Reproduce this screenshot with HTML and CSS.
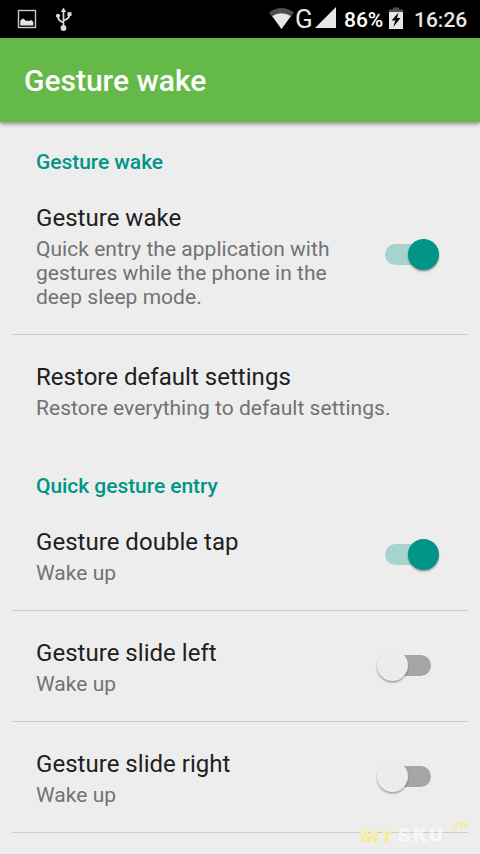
FILE: index.html
```html
<!DOCTYPE html>
<html lang="en">
<head>
<meta charset="utf-8">
<title>Gesture wake</title>
<link rel="stylesheet" href="styles.css">
</head>
<body>
<div class="status">
  <svg class="status-left" width="80" height="38" viewBox="0 0 80 38">
    <rect x="18.500" y="10.500" width="17" height="17" fill="none" stroke="#c9c9c9" stroke-width="1.400"/>
    <path d="M20.300 25.500V20.500l2.500-2 1.500.7 1.700 1.800 1.700-.5 1.600.4 2-.9 2 2v3.500z" fill="#e4e4e4"/>
    <g fill="none" stroke="#dcdcdc" stroke-width="1.700"><path d="M63.500 28V10M63.500 22.500Q58 21 58 16M63.500 20.500Q69.500 19 69.500 14"/></g>
    <g fill="#dcdcdc"><path d="M60.800 12 63.500 7.800 66.200 12z"/><circle cx="63.500" cy="28" r="2.900"/><circle cx="58" cy="15.800" r="2.100"/><rect x="67.500" y="12.200" width="4" height="3.800"/></g>
  </svg>
  <svg class="signal" width="28" height="38" viewBox="0 0 28 38">
    <path d="M1 12.500Q13.500 3.500 26 12.500L13.500 29z" fill="#4d4d4d"/>
    <path d="M4.200 16Q13.500 10.500 22.800 16L13.500 29z" fill="#e6e6e6"/>
  </svg>
  <span class="network">G</span>
  <svg class="cell" width="22" height="38" viewBox="0 0 22 38"><path d="M0 28 21 7V28z" fill="#e6e6e6"/></svg>
  <span class="percent">86%</span>
  <svg class="battery" width="15" height="38" viewBox="0 0 15 38">
    <path d="M4 7.500h6v2h4v3H0v-3h4z" fill="#4d4d4d"/>
    <path d="M0 12h14v17H0z" fill="#e6e6e6"/>
    <path d="M9.500 12.500 2.600 20.500H6.300L4.300 27 11.500 18H8z" fill="#000"/>
  </svg>
  <span class="clock">16:26</span>
</div>
<header class="toolbar"><h1>Gesture wake</h1></header>
<main>
  <h2 class="first">Gesture wake</h2>
  <section class="row divided">
    <div class="text"><h3>Gesture wake</h3><p>Quick entry the application with gestures while the phone in the deep sleep mode.</p></div>
    <div class="switch on"><i class="thumb"></i></div>
  </section>
  <section class="row">
    <div class="text wide"><h3>Restore default settings</h3><p>Restore everything to default settings.</p></div>
  </section>
  <h2>Quick gesture entry</h2>
  <section class="row divided">
    <div class="text"><h3>Gesture double tap</h3><p>Wake up</p></div>
    <div class="switch on"><i class="thumb"></i></div>
  </section>
  <section class="row divided">
    <div class="text"><h3>Gesture slide left</h3><p>Wake up</p></div>
    <div class="switch"><i class="thumb"></i></div>
  </section>
  <section class="row divided">
    <div class="text"><h3>Gesture slide right</h3><p>Wake up</p></div>
    <div class="switch"><i class="thumb"></i></div>
  </section>
</main>
<div class="watermark"><span class="my">MY</span><span class="sku">SKU</span><span class="ru">.ru</span></div>
</body>
</html>
```
FILE: styles.css
```css
* { box-sizing: border-box; }
body {
  position: relative;
  width: 480px;
  height: 854px;
  margin: 0;
  overflow: hidden;
  background: #ededed;
  font-family: Roboto, "Liberation Sans", sans-serif;
}
h1, h2, h3, p { margin: 0; }
svg { display: block; flex: none; }
.status {
  display: flex;
  height: 38px;
  background: #000;
  color: #e6e6e6;
  font-size: 21px;
  line-height: 40px;
}
.signal { margin-left: 188px; }
.network { width: 19px; margin-left: -1px; font-size: 26px; line-height: 38px; }
.cell { margin-left: 1px; }
.percent { width: 40px; margin-left: 7px; color: #fff; font-weight: 500; }
.battery { margin-left: 5px; }
.clock { margin-left: 10px; font-weight: 500; }
.toolbar {
  position: relative;
  height: 84px;
  padding-left: 24px;
  background: #65b948;
  box-shadow: 0 2px 4px rgba(0, 0, 0, .4);
}
h1 {
  color: #fff;
  font-size: 30px;
  font-weight: 500;
  line-height: 85px;
}
h2 {
  height: 55px;
  padding: 29px 36px 0;
  color: #009587;
  font-size: 21px;
  font-weight: 500;
  line-height: 24px;
  letter-spacing: -.05px;
}
h2.first { height: 54px; padding-top: 28px; }
.row {
  display: flex;
  align-items: center;
  justify-content: space-between;
  margin: 0 12px;
  padding: 28px 24px 25px;
}
.divided { border-bottom: 1px solid #cbcbcb; }
.text { width: 310px; }
.wide { width: 400px; }
h3 {
  color: #202020;
  font-size: 24px;
  font-weight: 400;
  line-height: 28px;
  letter-spacing: .03px;
}
p {
  margin-top: 5px;
  color: #727272;
  font-size: 21px;
  line-height: 24px;
  letter-spacing: .03px;
}
.switch {
  position: relative;
  width: 46px;
  height: 21px;
  margin: -4px 13px 0 0;
  border-radius: 11px;
  background: #a5a5a5;
}
.switch.on { background: #a6d3cf; }
.thumb {
  position: absolute;
  top: -5px;
  left: -8px;
  width: 31px;
  height: 31px;
  border-radius: 50%;
  background: #ececec;
  box-shadow: 0 1.5px 2px rgba(0, 0, 0, .35);
}
.on .thumb { left: 23px; background: #009587; }
.watermark {
  position: absolute;
  left: 360px;
  top: 826px;
  display: flex;
  font: 900 19px/20px Inter, sans-serif;
}
.my {
  width: 38px;
  background: linear-gradient(#f1efc8 20%, #f4ec74 90%);
  background-clip: text;
  -webkit-background-clip: text;
  color: transparent;
  letter-spacing: 1px;
}
.sku { width: 52px; color: rgba(250, 250, 250, .8); letter-spacing: 2px; }
.ru { margin-top: -11px; color: #f1ee9f; font-size: 12px; letter-spacing: 0; }
```
